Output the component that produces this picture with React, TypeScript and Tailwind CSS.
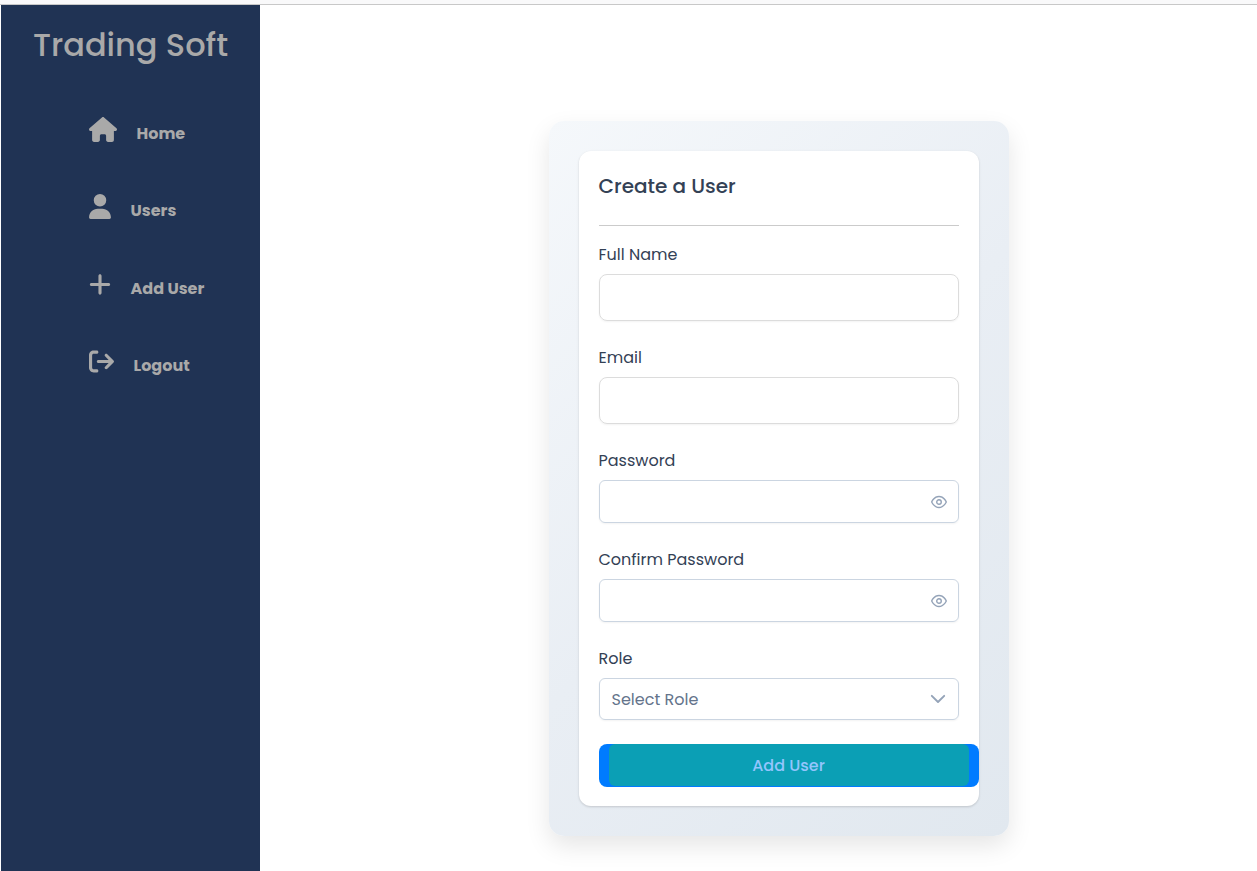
import type { ReactNode } from "react";
import { FaHouse, FaUser, FaPlus, FaArrowRightFromBracket } from "react-icons/fa6";

function EyeIcon() {
  return (
    <svg width="16" height="16" viewBox="0 0 14 14" className="fill-[#94a3b8]">
      <path
        fillRule="evenodd"
        clipRule="evenodd"
        d="M0.0535499 7.25213C0.208567 7.59162 2.40413 12.4 7 12.4C11.5959 12.4 13.7914 7.59162 13.9465 7.25213C13.9487 7.2471 13.9506 7.24304 13.952 7.24001C13.9837 7.16396 14 7.08239 14 7C14 6.91761 13.9837 6.83604 13.952 6.75999C13.9506 6.75696 13.9487 6.7529 13.9465 6.74787C13.7914 6.40838 11.5959 1.60001 7 1.60001C2.40413 1.60001 0.208567 6.40838 0.0535499 6.74787C0.0512519 6.7529 0.0494023 6.75696 0.048 6.75999C0.0163137 6.83604 0 6.91761 0 7C0 7.08239 0.0163137 7.16396 0.048 7.24001C0.0494023 7.24304 0.0512519 7.2471 0.0535499 7.25213ZM7 11.2C3.664 11.2 1.736 7.92001 1.264 7C1.736 6.07999 3.664 2.80001 7 2.80001C10.336 2.80001 12.264 6.07999 12.736 7C12.264 7.92001 10.336 11.2 7 11.2Z"
      />
      <circle cx="7" cy="7" r="2" fill="none" stroke="#94a3b8" strokeWidth="1.2" />
    </svg>
  );
}

function ChevronIcon() {
  return (
    <svg width="16" height="16" viewBox="0 0 16 16" fill="none">
      <path d="M1.8 4.8 8 11l6.2-6.2" stroke="#94a3b8" strokeWidth="1.9" strokeLinecap="round" strokeLinejoin="round" />
    </svg>
  );
}

function NavItem({ icon, children }: { icon: ReactNode; children: ReactNode }) {
  return (
    <a className="flex h-[77.4px] items-start text-[25px] text-[#a9a9a9]">
      {icon}
      <span className="ml-[19.5px] pt-[5px] text-base font-bold">{children}</span>
    </a>
  );
}

function Label({ children }: { children: ReactNode }) {
  return <label className="-ml-[0.5px] block h-6 pt-px text-base text-[#334155]">{children}</label>;
}

export default function App() {
  return (
    <div className="flex h-[871px] flex-col overflow-hidden bg-white font-[Poppins,Inter,sans-serif]">
      <div className="h-[5px] shrink-0 border-b border-[#c8c8c8] bg-[#f9f9fa]" />
      <div className="flex min-h-0 flex-1 pl-px">
        <aside className="w-[259px] shrink-0 bg-[#203354]">
          <h1 className="pt-4 text-center text-[32px] leading-[48px] font-medium whitespace-nowrap text-[#a9a9a9]">
            Trading Soft
          </h1>
          <nav className="mt-12 pl-[88px]">
            <NavItem icon={<FaHouse className="h-[25px] w-7" />}>Home</NavItem>
            <NavItem icon={<FaUser className="h-[25px] w-[22px]" />}>Users</NavItem>
            <NavItem icon={<FaPlus className="h-[25px] w-[22px]" />}>Add User</NavItem>
            <NavItem icon={<FaArrowRightFromBracket className="h-[25px] w-[25px]" />}>Logout</NavItem>
          </nav>
        </aside>
        <main className="flex-1 pt-[116px] pl-[289px]">
          <section className="h-[715px] w-[460px] rounded-[15px] bg-linear-135 from-[#f5f8fb] via-[#e9eef4] to-[#e1e8ef] p-[30px] shadow-[0_10px_25px_rgba(0,0,0,0.1)]">
            <form className="h-[655px] w-[400px] rounded-xl bg-white px-5 pt-5 shadow-[0_1px_3px_rgba(0,0,0,0.1),0_1px_2px_rgba(0,0,0,0.06)]">
              <h2 className="h-[55px] border-b border-[#cbcbcb] text-xl leading-[30px] font-medium text-[#334155]">
                <span className="-ml-[0.5px]">Create a User</span>
              </h2>
              <div className="mt-4 h-[103px]">
                <Label>Full Name</Label>
                <input className="mt-2 h-[47px] w-full rounded-lg border border-[#dcdcdc] px-3 shadow-[0_1px_2px_rgba(18,18,23,0.05)] outline-none" />
              </div>
              <div className="h-[103px]">
                <Label>Email</Label>
                <input className="mt-2 h-[47px] w-full rounded-lg border border-[#dcdcdc] px-3 shadow-[0_1px_2px_rgba(18,18,23,0.05)] outline-none" />
              </div>
              <div className="h-[99px]">
                <Label>Password</Label>
                <div className="mt-2 flex h-[43px] items-center rounded-md border border-[#cbd5e1] pr-[11px] pl-3 shadow-[0_1px_2px_rgba(18,18,23,0.05)]">
                  <input type="password" className="min-w-0 flex-1 outline-none" />
                  <EyeIcon />
                </div>
              </div>
              <div className="h-[99px]">
                <Label>Confirm Password</Label>
                <div className="mt-2 flex h-[43px] items-center rounded-md border border-[#cbd5e1] pr-[11px] pl-3 shadow-[0_1px_2px_rgba(18,18,23,0.05)]">
                  <input type="password" className="min-w-0 flex-1 outline-none" />
                  <EyeIcon />
                </div>
              </div>
              <div className="h-[98px]">
                <Label>Role</Label>
                <div className="mt-2 flex h-[42px] items-center justify-between rounded-md border border-[#cbd5e1] pr-3 pl-[11.5px] text-base text-[#64748b] shadow-[0_1px_2px_rgba(18,18,23,0.05)]">
                  <span className="pt-0.5">Select Role</span>
                  <ChevronIcon />
                </div>
              </div>
              <div className="h-[43px] w-[380px] rounded-lg bg-[#007bff] px-2.5 pb-px">
                <button type="button" className="block h-[42px] w-full rounded-md bg-[#0b9fb5] pt-0.5 pr-px text-base font-medium text-[#93c5fd]">
                  Add User
                </button>
              </div>
            </form>
          </section>
        </main>
      </div>
    </div>
  );
}
